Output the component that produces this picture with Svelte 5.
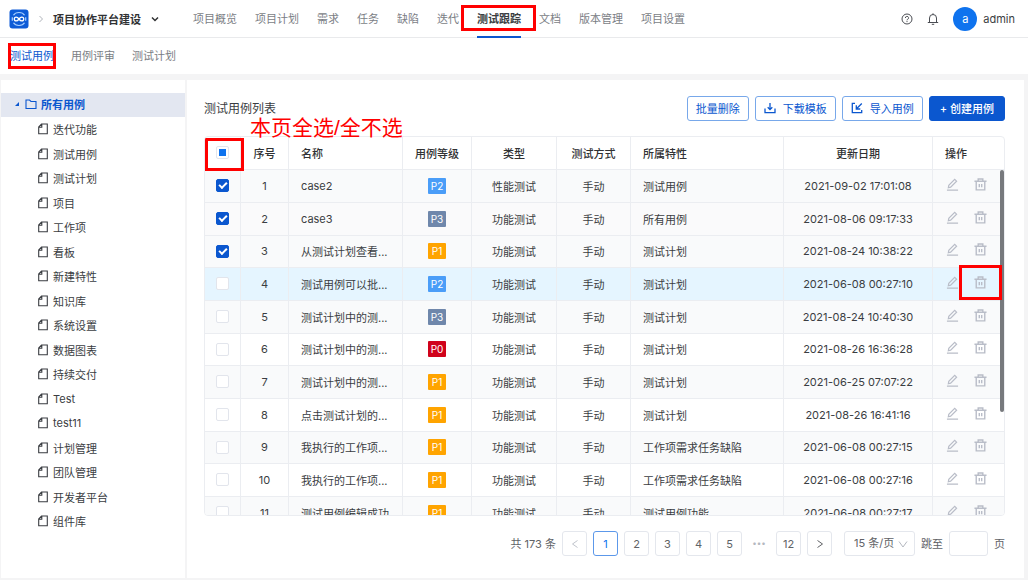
<script>
  const menus = ['项目概览', '项目计划', '需求', '任务', '缺陷', '迭代', '测试跟踪', '文档', '版本管理', '项目设置'];
  const tabs = ['测试用例', '用例评审', '测试计划'];
  const folders = [
    '迭代功能', '测试用例', '测试计划', '项目', '工作项', '看板', '新建特性', '知识库', '系统设置',
    '数据图表', '持续交付', 'Test', 'test11', '计划管理', '团队管理', '开发者平台', '组件库',
  ];
  const pages = [1, 2, 3, 4, 5];

  let rows = $state([
    { id: 1, name: 'case2', level: 'P2', type: '性能测试', feature: '测试用例', date: '2021-09-02 17:01:08', checked: true },
    { id: 2, name: 'case3', level: 'P3', type: '功能测试', feature: '所有用例', date: '2021-08-06 09:17:33', checked: true },
    { id: 3, name: '从测试计划查看...', level: 'P1', type: '功能测试', feature: '测试计划', date: '2021-08-24 10:38:22', checked: true },
    { id: 4, name: '测试用例可以批...', level: 'P2', type: '功能测试', feature: '测试计划', date: '2021-06-08 00:27:10', checked: false },
    { id: 5, name: '测试计划中的测...', level: 'P3', type: '功能测试', feature: '测试计划', date: '2021-08-24 10:40:30', checked: false },
    { id: 6, name: '测试计划中的测...', level: 'P0', type: '功能测试', feature: '测试计划', date: '2021-08-26 16:36:28', checked: false },
    { id: 7, name: '测试计划中的测...', level: 'P1', type: '功能测试', feature: '测试计划', date: '2021-06-25 07:07:22', checked: false },
    { id: 8, name: '点击测试计划的...', level: 'P1', type: '功能测试', feature: '测试计划', date: '2021-08-26 16:41:16', checked: false },
    { id: 9, name: '我执行的工作项...', level: 'P1', type: '功能测试', feature: '工作项需求任务缺陷', date: '2021-06-08 00:27:15', checked: false },
    { id: 10, name: '我执行的工作项...', level: 'P1', type: '功能测试', feature: '工作项需求任务缺陷', date: '2021-06-08 00:27:16', checked: false },
    { id: 11, name: '测试用例编辑成功', level: 'P1', type: '功能测试', feature: '测试用例功能', date: '2021-06-08 00:27:17', checked: false },
  ]);

  let activeMenu = $state('测试跟踪');
  let activeTab = $state('测试用例');
  let page = $state(1);
  let hovered = $state(4);

  let allChecked = $derived(rows.every(r => r.checked));
  let someChecked = $derived(rows.some(r => r.checked) && !allChecked);

  function toggleAll() {
    const next = !allChecked;
    rows.forEach(r => (r.checked = next));
  }
</script>

<div class="app">
  <header class="topbar">
    <svg class="logo" viewBox="0 0 20 20">
      <rect x="0.5" y="0.5" width="19" height="19" rx="3" fill="#0d5bd7" />
      <path d="M4.500 6.200C5.500 4.500 7.500 3.500 10 3.500S14.500 4.500 15.500 6.200M4.500 13.800C5.500 15.500 7.500 16.500 10 16.500S14.500 15.500 15.500 13.800M3.300 8.300V11.700M16.700 8.300V11.700" fill="none" stroke="#a9d0ff" stroke-width="1.200" />
      <path d="M10 10C9 8.600 8.200 8.100 7.200 8.100A1.900 1.900 0 0 0 7.200 11.900C8.200 11.900 9 11.400 10 10S11.800 8.100 12.800 8.100A1.900 1.900 0 0 1 12.800 11.900C11.800 11.900 11 11.400 10 10Z" fill="none" stroke="#fff" stroke-width="1.300" />
    </svg>
    <svg class="crumb" viewBox="0 0 8 8"><path d="M2.500 1 5.500 4 2.500 7" fill="none" stroke="#b0b4bb" /></svg>
    <button class="project">
      项目协作平台建设
      <svg viewBox="0 0 8 8"><path d="M1 2.500 4 5.500 7 2.500" fill="none" stroke="#303133" stroke-width="1.500" /></svg>
    </button>
    <nav class="menus">
      {#each menus as menu}
        <a href="#menu" class:active={menu === activeMenu} onclick={() => (activeMenu = menu)}>
          {menu}
          {#if menu === '测试跟踪'}<span class="mark mark-menu"></span>{/if}
        </a>
      {/each}
    </nav>
    <div class="user">
      <button class="icon-btn" aria-label="帮助">
        <svg viewBox="0 0 12 12" fill="none" stroke="#4a4d53">
          <circle cx="6" cy="6" r="5" />
          <path d="M4.400 5A1.600 1.500 0 1 1 6.600 6.300Q6 6.500 6 7.300M6 8.100V9.100" />
        </svg>
      </button>
      <button class="icon-btn" aria-label="通知">
        <svg viewBox="0 0 12 12" fill="none" stroke="#4a4d53">
          <path d="M2.500 9.500V5A3.500 3.500 0 0 1 9.500 5V9.500M0.800 9.500H11.200M6 0.300V1.500M4.800 11.300H7.200" />
        </svg>
      </button>
      <span class="avatar">a</span>
      <span class="username">admin</span>
    </div>
  </header>

  <nav class="tabs">
    {#each tabs as tab}
      <a href="#tab" class:active={tab === activeTab} onclick={() => (activeTab = tab)}>
        {tab}
        {#if tab === '测试用例'}<span class="mark mark-tab"></span>{/if}
      </a>
    {/each}
  </nav>

  <div class="body">
    <aside class="sidebar">
      <a href="#all" class="tree-root">
        <svg class="caret" viewBox="0 0 6 6"><path d="M5 1V5H1Z" fill="#0b57cf" /></svg>
        <svg class="folder" viewBox="0 0 12 12"><path d="M1 2H4.500L6 3.500H11V10.500H1Z" fill="none" stroke="#0b57cf" stroke-width="1.100" /></svg>
        所有用例
      </a>
      <ul>
        {#each folders as folder}
          <li>
            <a href="#folder">
              <svg viewBox="0 0 10 12"><path d="M3.500 1H9.300V10.700H0.700V4ZM3.800 1V4.200H0.700" fill="none" stroke="#3a3d42" stroke-width="1.100" /></svg>
              {folder}
            </a>
          </li>
        {/each}
      </ul>
    </aside>

    <main class="content">
      <div class="toolbar">
        <h1>测试用例列表<span class="note">本页全选/全不选</span></h1>
        <div class="actions">
          <button class="btn">批量删除</button>
          <button class="btn">
            <svg viewBox="0 0 12 12" fill="none" stroke="#0b57cf" stroke-width="1.300"><path d="M1 6.500V10.700H11V6.500M6 1V7.500M3.700 5.300 6 7.600 8.300 5.300" /></svg>
            下载模板
          </button>
          <button class="btn">
            <svg viewBox="0 0 12 12" fill="none" stroke="#0b57cf" stroke-width="1.300"><path d="M4 1.300H1.300V10.700H10.700V8M10.800 1.500 5.500 6.800M5.300 3.300V7H9.300" /></svg>
            导入用例
          </button>
          <button class="btn primary">+ 创建用例</button>
        </div>
      </div>

      <div class="table-box">
        <table>
          <colgroup>
            <col class="c-check" /><col class="c-no" /><col class="c-name" /><col class="c-level" /><col class="c-type" />
            <col class="c-way" /><col class="c-feature" /><col class="c-date" /><col class="c-op" />
          </colgroup>
          <thead>
            <tr>
              <th>
                <input type="checkbox" aria-label="全选" checked={allChecked} indeterminate={someChecked} onchange={toggleAll} />
                <span class="mark mark-all"></span>
              </th>
              <th>序号</th>
              <th class="left">名称</th>
              <th>用例等级</th>
              <th>类型</th>
              <th>测试方式</th>
              <th class="left">所属特性</th>
              <th>更新日期</th>
              <th class="left">操作</th>
            </tr>
          </thead>
          <tbody>
            {#each rows as row}
              <tr class:hovered={row.id === hovered} onmouseenter={() => (hovered = row.id)}>
                <td><input type="checkbox" aria-label={row.name} bind:checked={row.checked} /></td>
                <td>{row.id}</td>
                <td class="left">{row.name}</td>
                <td><span class="level {row.level.toLowerCase()}">{row.level}</span></td>
                <td>{row.type}</td>
                <td>手动</td>
                <td class="left">{row.feature}</td>
                <td>{row.date}</td>
                <td class="ops">
                  <div>
                    <button class="icon-btn" aria-label="编辑">
                      <svg viewBox="0 0 14 14" fill="none" stroke="#b9bdc8" stroke-width="1.300"><path d="M1 13H13M2.500 10.500 3 7.800 9.400 1.400 11.400 3.400 5 9.800Z" /></svg>
                    </button>
                    <button class="icon-btn" aria-label="删除">
                      <svg viewBox="0 0 14 14" fill="none" stroke="#b9bdc8" stroke-width="1.500"><path d="M0.500 3.500H13.500M4.500 3.500V1H9.500V3.500M2.400 3.500V12.800H11.600V3.500M5.700 6.500V10M8.300 6.500V10" /></svg>
                      {#if row.id === 4}<span class="mark mark-delete"></span>{/if}
                    </button>
                  </div>
                </td>
              </tr>
            {/each}
          </tbody>
        </table>
        <div class="scroll-thumb"></div>
      </div>

      <div class="pagination">
        <span>共 173 条</span>
        <button class="page" aria-label="上一页" disabled>
          <svg viewBox="0 0 10 10"><path d="M7.500 1.500 2.500 5 7.500 8.500" fill="none" stroke="#c0c4cc" /></svg>
        </button>
        {#each pages as num}
          <button class="page" class:current={num === page} onclick={() => (page = num)}>{num}</button>
        {/each}
        <span class="more">•••</span>
        <button class="page" onclick={() => (page = 12)}>12</button>
        <button class="page" aria-label="下一页" onclick={() => page++}>
          <svg viewBox="0 0 10 10"><path d="M2.500 1.500 7.500 5 2.500 8.500" fill="none" stroke="#606266" /></svg>
        </button>
        <div class="size">
          <select aria-label="每页条数">
            <option>15 条/页</option>
          </select>
          <svg viewBox="0 0 10 10"><path d="M1 2.500 5 8 9 2.500" fill="none" stroke="#b4b8c0" /></svg>
        </div>
        <label for="jump">跳至</label>
        <input id="jump" type="text" />
        <span>页</span>
      </div>
    </main>
  </div>
</div>

<style>
  :global(body) {
    margin: 0;
    background: #f4f4f5;
  }

  .app {
    display: flex;
    flex-direction: column;
    height: 100vh;
    font-family: Inter, "Noto Sans CJK SC", sans-serif;
    font-size: 11px;
    color: #3a3d42;
  }

  *, *::before, *::after { box-sizing: border-box; }

  a { color: inherit; text-decoration: none; }

  button, input, select {
    font: inherit;
    color: inherit;
    margin: 0;
    padding: 0;
  }

  button { cursor: pointer; }

  svg { display: block; flex: none; }

  .mark {
    position: absolute;
    z-index: 2;
    border: 3px solid #f00;
    pointer-events: none;
  }

  .mark-menu { inset: 5px -15px 5px -16px; }
  .mark-tab { inset: 5px -2px; }
  .mark-all { inset: 1px -4px -2px 0; }
  .mark-delete { inset: -11px -15px -11px -15px; }

  .topbar {
    display: flex;
    align-items: center;
    flex: none;
    height: 38px;
    padding: 0 13px 0 9px;
    background: #fff;
    border-bottom: 1px solid #e9eaec;
  }

  .logo { width: 20px; height: 20px; }
  .crumb { width: 8px; height: 8px; margin: 0 8px; }

  .project {
    display: flex;
    align-items: center;
    gap: 10px;
    border: 0;
    background: none;
    font-weight: 700;
    color: #303133;
    white-space: nowrap;
  }

  .project svg { width: 8px; height: 8px; }

  .menus {
    display: flex;
    gap: 18px;
    height: 38px;
    margin-left: 34px;
    color: #7b7e85;
    white-space: nowrap;
  }

  .menus a { position: relative; line-height: 38px; }

  .menus .active {
    font-weight: 700;
    color: #3a3d42;
    border-bottom: 2px solid #0b57cf;
  }

  .user {
    display: flex;
    align-items: center;
    gap: 14px;
    margin-left: auto;
  }

  .icon-btn {
    position: relative;
    border: 0;
    background: none;
  }

  .user .icon-btn svg { width: 12px; height: 12px; }

  .avatar {
    width: 24px;
    height: 24px;
    border-radius: 50%;
    background: #0f73ee;
    color: #fff;
    line-height: 24px;
    text-align: center;
  }

  .username { margin-left: -8px; }

  .tabs {
    display: flex;
    gap: 17px;
    flex: none;
    height: 36px;
    padding: 0 10px;
    background: #fff;
    color: #7b7e85;
    line-height: 36px;
  }

  .tabs a { position: relative; }
  .tabs .active { color: #0b57cf; }

  .body {
    display: flex;
    gap: 2px;
    flex: 1;
    min-height: 0;
    padding: 6px 4px 2px 1px;
  }

  .sidebar {
    flex: none;
    width: 184px;
    padding-top: 13px;
    background: #fff;
  }

  .tree-root {
    display: flex;
    align-items: center;
    height: 24px;
    padding: 0 0 2px 13px;
    background: #e3e7f1;
    color: #0b57cf;
    font-weight: 700;
  }

  .caret { width: 6px; height: 6px; margin-right: 5px; }
  .folder { width: 12px; height: 12px; margin-right: 4px; }

  ul {
    list-style: none;
    margin: 0;
    padding: 0;
  }

  li a {
    display: flex;
    align-items: center;
    gap: 5px;
    height: 24px;
    padding: 0 0 1px 37px;
  }

  li:nth-child(odd) a { height: 25px; }
  li svg { width: 10px; height: 12px; }

  .content {
    display: flex;
    flex-direction: column;
    flex: 1;
    min-width: 0;
    padding: 16px 19px 22px 17px;
    background: #fff;
  }

  .toolbar {
    display: flex;
    align-items: center;
    justify-content: space-between;
    height: 25px;
    margin-bottom: 15px;
  }

  h1 {
    position: relative;
    margin: 0;
    padding-bottom: 2px;
    font-size: 12px;
    font-weight: 400;
    white-space: nowrap;
  }

  .note {
    position: absolute;
    top: 14px;
    left: 46px;
    z-index: 2;
    font-family: "Liberation Sans", "Noto Sans CJK SC", sans-serif;
    font-size: 21px;
    line-height: 30px;
    color: #f00;
  }

  .actions { display: flex; gap: 6px; }

  .btn {
    display: flex;
    align-items: center;
    justify-content: center;
    gap: 7px;
    height: 25px;
    padding: 0 8px 2px;
    border: 1px solid #78a8ea;
    border-radius: 3px;
    background: #fff;
    color: #0b57cf;
  }

  .btn svg { width: 12px; height: 12px; }

  .btn.primary {
    padding: 0 10px 2px;
    background: #0b57cf;
    border-color: #0b57cf;
    color: #fff;
    font-weight: 500;
  }

  .table-box {
    position: relative;
    flex: 1;
    min-height: 0;
    overflow: hidden;
    border: 1px solid #ebedf1;
    border-radius: 4px;
  }

  table {
    width: 100%;
    table-layout: fixed;
    border-collapse: separate;
    border-spacing: 0;
  }

  .c-check { width: 36px; }
  .c-no { width: 48px; }
  .c-name { width: 114px; }
  .c-level { width: 69px; }
  .c-type { width: 85px; }
  .c-way { width: 74px; }
  .c-date { width: 149px; }
  .c-op { width: 71px; }

  th, td {
    position: relative;
    height: 33px;
    padding: 0 0 1px;
    border-right: 1px solid #ebedf1;
    border-bottom: 1px solid #ebedf1;
    font-weight: 400;
    text-align: center;
    white-space: nowrap;
  }

  th { font-weight: 500; color: #303133; }
  th:last-child, td:last-child { border-right: 0; }
  .left { padding-left: 12px; text-align: left; }

  tbody tr:nth-child(3n) td { height: 32px; }
  tbody tr:nth-child(odd) { background: #f9fafb; }
  tbody tr:nth-child(2) { background: #fafafb; }
  tbody tr.hovered { background: #e5f5ff; }

  input[type="checkbox"] {
    appearance: none;
    display: block;
    position: relative;
    width: 13px;
    height: 13px;
    margin: 0 auto;
    border: 1px solid #e2e5ec;
    border-radius: 2px;
    background: #fff;
  }

  input[type="checkbox"]:checked {
    background: #0b57cf;
    border-color: #0b57cf;
  }

  input[type="checkbox"]:checked::after {
    content: "";
    position: absolute;
    top: 2px;
    left: 2px;
    width: 8px;
    height: 5px;
    border: solid #fff;
    border-width: 0 0 2px 2px;
    transform: rotate(-45deg);
  }

  input[type="checkbox"]:indeterminate::after {
    content: "";
    position: absolute;
    inset: 2px;
    background: #0f73ee;
  }

  .level {
    display: inline-block;
    width: 18px;
    height: 16px;
    border-radius: 1px;
    color: #fff;
    font-size: 10px;
    line-height: 16px;
    vertical-align: middle;
  }

  .p0 { background: #d0021b; }
  .p1 { background: #ffa400; }
  .p2 { background: #4a9df8; }
  .p3 { background: #6f87ab; }

  .ops div {
    display: flex;
    gap: 15px;
    padding: 0 0 3px 13px;
  }

  .ops svg { width: 13px; height: 13px; }

  .scroll-thumb {
    position: absolute;
    top: 33px;
    right: 0;
    width: 4px;
    height: 64%;
    border-radius: 2px;
    background: #77797d;
  }

  .pagination {
    display: flex;
    align-items: center;
    justify-content: flex-end;
    gap: 6px;
    height: 25px;
    margin-top: 15px;
    color: #606266;
    white-space: nowrap;
  }

  .pagination > span, .pagination label { padding-bottom: 2px; }

  .page {
    display: flex;
    align-items: center;
    justify-content: center;
    width: 25px;
    height: 25px;
    border: 1px solid #e4e7ed;
    border-radius: 3px;
    background: #fff;
  }

  .page svg { width: 10px; height: 10px; }
  .page.current { border-color: #5c98ea; color: #0f73ee; }

  .more {
    width: 22px;
    color: #b4b8c0;
    font-size: 8px;
    text-align: center;
  }

  .size {
    display: flex;
    align-items: center;
    position: relative;
    margin-left: 6px;
  }

  select {
    appearance: none;
    width: 71px;
    height: 25px;
    padding: 0 0 2px 9px;
    border: 1px solid #e4e7ed;
    border-radius: 3px;
    background: #fff;
  }

  .size svg {
    position: absolute;
    right: 7px;
    width: 10px;
    height: 10px;
    pointer-events: none;
  }

  #jump {
    width: 39px;
    height: 25px;
    border: 1px solid #e4e7ed;
    border-radius: 3px;
    text-align: center;
  }
</style>
